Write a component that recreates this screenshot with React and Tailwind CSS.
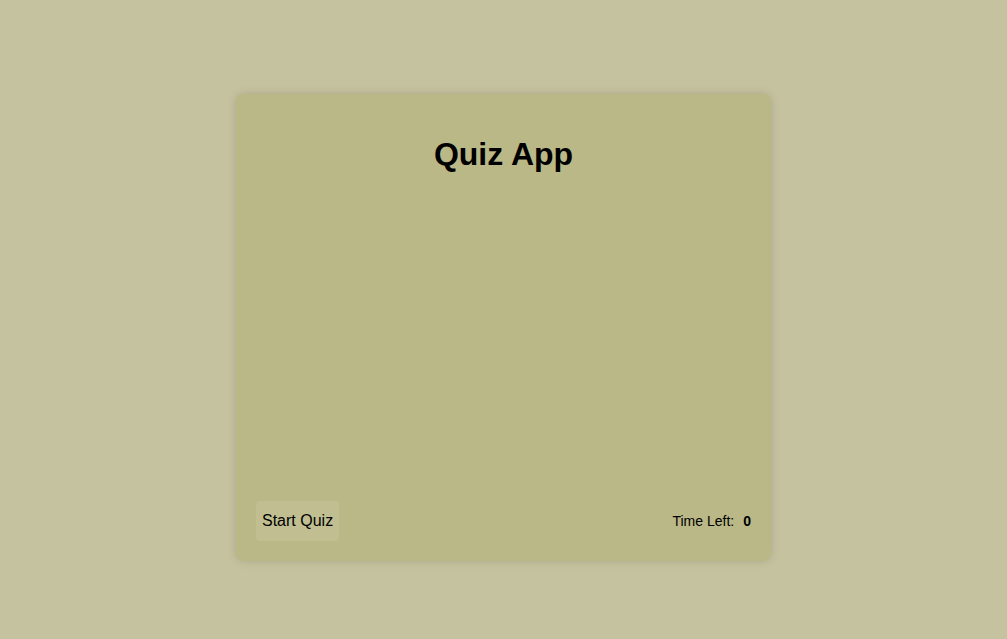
export default function App() {
    return (
        <div className="min-h-screen w-full bg-[#c5c39f] flex items-start justify-center pt-[94px] font-['Liberation_Sans',Arial,sans-serif] text-black">
            <div className="w-[535px] h-[467px] bg-[#bab886] rounded-lg shadow-[0_0_10px_rgba(0,0,0,0.15)] p-5 flex flex-col">
                <h1 className="text-[32px] leading-[37px] font-bold text-center mt-[22px]">Quiz App</h1>
                <div className="flex-1"></div>
                <div className="flex items-center justify-between">
                    <button className="h-10 px-[6px] rounded bg-[#c1bf92] text-base">Start Quiz</button>
                    <div className="flex items-center text-sm">
                        <span>Time Left:</span>
                        <span className="ml-[9px] font-bold">0</span>
                    </div>
                </div>
            </div>
        </div>
    );
}
